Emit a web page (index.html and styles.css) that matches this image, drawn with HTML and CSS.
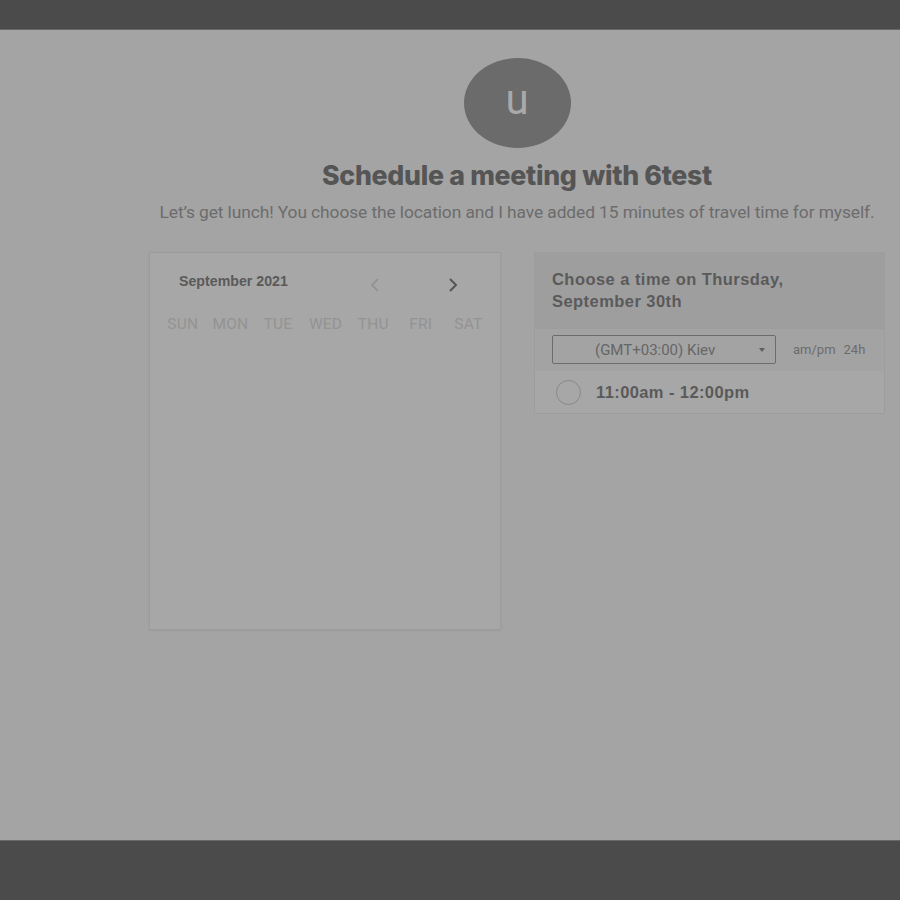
FILE: index.html
```html
<!DOCTYPE html>
<html>
<head>
<meta charset="utf-8">
<link rel="stylesheet" href="styles.css">
</head>
<body>
<div class="topbar"></div>
<main class="main">
  <div class="avatar">u</div>
  <h1 class="title">Schedule a meeting with 6test</h1>
  <p class="desc">Let’s get lunch! You choose the location and I have added 15 minutes of travel time for myself.</p>
  <div class="cards">
    <section class="calendar">
      <div class="cal-head">
        <span class="month">September 2021</span>
        <svg class="nav prev" width="10" height="14" viewBox="0 0 10 14"><path d="M8 1 L2 7 L8 13" fill="none" stroke="#8f8f8f" stroke-width="1.6"/></svg>
        <svg class="nav next" width="10" height="14" viewBox="0 0 10 14"><path d="M2 1 L8 7 L2 13" fill="none" stroke="#555" stroke-width="2"/></svg>
      </div>
      <div class="days">
        <span>SUN</span><span>MON</span><span>TUE</span><span>WED</span><span>THU</span><span>FRI</span><span>SAT</span>
      </div>
    </section>
    <section class="times">
      <div class="times-head">Choose a time on Thursday,<br>September 30th</div>
      <div class="tz-row">
        <div class="select"><span>(GMT+03:00) Kiev</span><span class="caret"></span></div>
        <div class="fmt"><span>am/pm</span><span>24h</span></div>
      </div>
      <div class="slot">
        <span class="radio"></span>
        <span class="slot-text">11:00am - 12:00pm</span>
      </div>
    </section>
  </div>
</main>
<div class="bottombar"></div>
</body>
</html>
```
FILE: styles.css
```css
* { box-sizing: border-box; }
html, body { margin: 0; padding: 0; }
body {
  width: 900px;
  height: 900px;
  background: #a4a4a4;
  font-family: Roboto, "Liberation Sans", sans-serif;
  display: flex;
  flex-direction: column;
  overflow: hidden;
}
.topbar {
  height: 30px;
  background: #4b4b4b;
  border-bottom: 1px solid #686868;
  flex: none;
}
.main {
  height: 810px;
  flex: none;
  display: flex;
  flex-direction: column;
  align-items: center;
  padding-top: 28px;
  padding-left: 134px;
}
.bottombar {
  flex: 1;
  background: #4b4b4b;
  border-top: 1px solid #686868;
}
.avatar {
  width: 107px;
  height: 90px;
  border-radius: 50%;
  background: #6b6b6b;
  color: #a9a9a9;
  font-size: 42px;
  line-height: 84px;
  text-align: center;
  font-family: Roboto, sans-serif;
}
.title {
  margin: 12px 0 0;
  font-family: Inter, Roboto, sans-serif;
  font-weight: 800;
  font-size: 26.7px;
  letter-spacing: -0.3px;
  color: #555555;
  line-height: 30px;
}
.desc {
  margin: 11px 0 0;
  font-size: 17.4px;
  color: #6c6c6c;
  line-height: 22px;
  white-space: nowrap;
  letter-spacing: -0.1px;
}
.cards {
  display: flex;
  align-self: flex-start;
  margin-left: 15px;
  margin-top: 29px;
  gap: 33px;
  align-items: flex-start;
}
.calendar {
  width: 352px;
  height: 378px;
  background: #a7a7a7;
  border: 1px solid #9c9c9c;
  box-shadow: 0 1px 2px rgba(0,0,0,0.06);
  padding: 18px 0 0 0;
}
.cal-head {
  display: flex;
  align-items: center;
  height: 20px;
  padding-left: 29px;
}
.month {
  font-family: "Liberation Sans", Arial, sans-serif;
  font-weight: 700;
  font-size: 14.2px;
  color: #5a5a5a;
  width: 191px;
}
.nav {
  margin-top: 8px;
}
.prev { margin-right: 68px; }
.days {
  display: grid;
  grid-template-columns: repeat(7, 47.6px);
  padding-left: 9px;
  margin-top: 24px;
  font-size: 15.5px;
  letter-spacing: 0.2px;
  color: #939393;
  text-align: center;
}
.times {
  width: 351px;
  background: #a6a6a6;
  border: 1px solid #9d9d9d;
}
.times-head {
  background: #9e9e9e;
  padding: 15px 17px 15px;
  font-family: "Liberation Sans", Arial, sans-serif;
  font-weight: 700;
  font-size: 16.5px;
  letter-spacing: 0.45px;
  line-height: 22px;
  color: #5a5a5a;
  height: 76px;
}
.tz-row {
  display: flex;
  align-items: center;
  padding: 6px 17px 7px;
  background: #a3a3a3;
}
.select {
  width: 224px;
  height: 29px;
  border: 1px solid #6c6c6c;
  border-radius: 2px;
  display: flex;
  align-items: center;
  padding-left: 42px;
  padding-right: 10px;
  font-size: 15px;
  color: #666;
  justify-content: space-between;
}
.caret {
  width: 0; height: 0;
  border-left: 3.5px solid transparent;
  border-right: 3.5px solid transparent;
  border-top: 4px solid #5f5f5f;
}
.fmt {
  margin-left: 17px;
  display: flex;
  gap: 8px;
  font-size: 13px;
  color: #6c6c6c;
}
.slot {
  display: flex;
  align-items: center;
  height: 42px;
  padding-left: 21px;
  background: #a7a7a7;
}
.radio {
  width: 25px;
  height: 25px;
  border-radius: 50%;
  border: 1.5px solid #888;
}
.slot-text {
  margin-left: 15px;
  font-family: "Liberation Sans", Arial, sans-serif;
  font-weight: 700;
  font-size: 16.5px;
  letter-spacing: 0.4px;
  color: #5a5a5a;
}
```
